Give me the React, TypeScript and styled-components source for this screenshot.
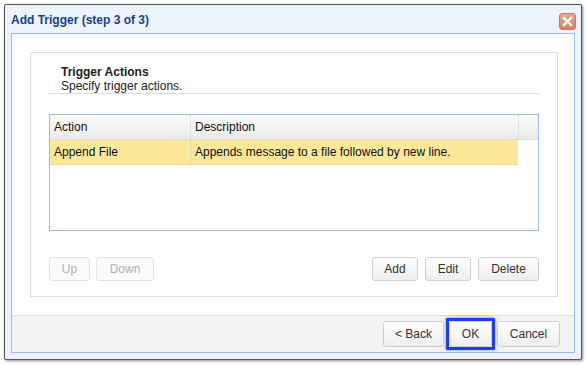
import React from 'react';
import styled, { createGlobalStyle, css } from 'styled-components';

const Global = createGlobalStyle`
  html, body {
    margin: 0;
    padding: 0;
    background: #fff;
    font-family: "Liberation Sans", Arial, sans-serif;
    font-size: 12px;
    color: #000;
  }
  * { box-sizing: border-box; }
`;

const Window = styled.div`
  margin: 4px;
  width: 578px;
  height: 356px;
  border: 1px solid #555;
  border-radius: 2px;
  background: #edf3fd;
  box-shadow: 1px 1px 3px rgba(0, 0, 0, 0.45);
  display: flex;
  flex-direction: column;
`;

const TitleBar = styled.div`
  height: 28px;
  flex: none;
  padding: 1px 5px 0 6px;
  display: flex;
  align-items: center;
  justify-content: space-between;
`;

const Title = styled.span`
  font-weight: bold;
  font-size: 12px;
  color: #15428b;
`;

const Close = styled.div`
  width: 17px;
  height: 17px;
  margin-top: 3px;
  border: 1px solid #c7785f;
  border-radius: 3px;
  background: linear-gradient(#eba890, #d9805f);
  display: flex;
  align-items: center;
  justify-content: center;
`;

const Body = styled.div`
  flex: 1;
  margin: 0 6px 6px;
  border: 1px solid #99bbe8;
  display: flex;
  flex-direction: column;
`;

const Content = styled.div`
  flex: 1;
  background: #fff;
  padding: 18px 16px 18px 18px;
  display: flex;
`;

const Panel = styled.div`
  flex: 1;
  border: 1px solid #ddd;
  padding: 12px 18px 14px;
  display: flex;
  flex-direction: column;
`;

const Header = styled.div`
  padding: 0 0 0 12px;
  border-bottom: 1px solid #ddd;
  line-height: 14px;
`;

const HeaderTitle = styled.div`
  font-weight: bold;
  color: #222;
`;

const HeaderSub = styled.div`
  color: #222;
`;

const Grid = styled.div`
  margin-top: 20px;
  height: 117px;
  border: 1px solid #99bbe8;
`;

const Row = styled.div<{ head?: boolean }>`
  display: flex;
  height: 25px;
  ${(p) =>
    p.head
      ? css`
          background: linear-gradient(#fafafa, #ebebeb);
          border-bottom: 1px solid #ddd;
        `
      : css`
          width: 468px;
          background: #fde798;
          border-bottom: 1px dotted #d6c9a0;
        `}
`;

const Cell = styled.div<{ w?: number }>`
  width: ${(p) => (p.w ? `${p.w}px` : 'auto')};
  flex: ${(p) => (p.w ? 'none' : '1')};
  padding: 0 4px;
  display: flex;
  align-items: center;
  color: #111;
  & + & {
    border-left: 1px dotted #ccc;
  }
`;

const Toolbar = styled.div`
  margin-top: 26px;
  display: flex;
  justify-content: space-between;
`;

const Group = styled.div<{ gap: number }>`
  display: flex;
  gap: ${(p) => p.gap}px;
`;

const Button = styled.button<{ w: number; h?: number; disabled?: boolean }>`
  width: ${(p) => p.w}px;
  height: ${(p) => p.h ?? 24}px;
  padding: 0;
  font-family: "Liberation Sans", Arial, sans-serif;
  font-size: 12px;
  color: ${(p) => (p.disabled ? '#b0b0b0' : '#333')};
  border: 1px solid ${(p) => (p.disabled ? '#e3e3e3' : '#cfcfcf')};
  border-radius: 3px;
  background: ${(p) => (p.disabled ? '#fbfbfb' : 'linear-gradient(#fff, #eeeeee)')};
  box-shadow: ${(p) => (p.disabled ? 'none' : 'inset 0 1px 0 #fff')};
`;

const Focus = styled.div`
  border: 3px solid #1f3df2;
  border-radius: 1px;
  box-shadow: 0 0 3px rgba(0, 0, 40, 0.5);
  display: flex;
  margin: -3px 0;
`;

const Footer = styled.div`
  height: 37px;
  flex: none;
  border-top: 1px solid #ddd;
  background: #f3f3f3;
  padding: 5px 14px 0 0;
  display: flex;
  justify-content: flex-end;
  align-items: flex-start;
  gap: 2px;
`;

export default function App() {
  return (
    <>
      <Global />
      <Window>
        <TitleBar>
          <Title>Add Trigger (step 3 of 3)</Title>
          <Close>
            <svg width="11" height="11" viewBox="0 0 11 11">
              <path d="M2 2 L9 9 M9 2 L2 9" stroke="#fff" strokeWidth="2.4" strokeLinecap="square" />
            </svg>
          </Close>
        </TitleBar>
        <Body>
          <Content>
            <Panel>
              <Header>
                <HeaderTitle>Trigger Actions</HeaderTitle>
                <HeaderSub>Specify trigger actions.</HeaderSub>
              </Header>
              <Grid>
                <Row head>
                  <Cell w={140}>Action</Cell>
                  <Cell w={328}>Description</Cell>
                  <Cell />
                </Row>
                <Row>
                  <Cell w={140}>Append File</Cell>
                  <Cell w={328}>Appends message to a file followed by new line.</Cell>
                </Row>
              </Grid>
              <Toolbar>
                <Group gap={6}>
                  <Button w={41} disabled>Up</Button>
                  <Button w={58} disabled>Down</Button>
                </Group>
                <Group gap={7}>
                  <Button w={46}>Add</Button>
                  <Button w={46}>Edit</Button>
                  <Button w={61}>Delete</Button>
                </Group>
              </Toolbar>
            </Panel>
          </Content>
          <Footer>
            <Button w={61} h={26}>&lt; Back</Button>
            <Focus>
              <Button w={43} h={26}>OK</Button>
            </Focus>
            <Button w={63} h={26}>Cancel</Button>
          </Footer>
        </Body>
      </Window>
    </>
  );
}
